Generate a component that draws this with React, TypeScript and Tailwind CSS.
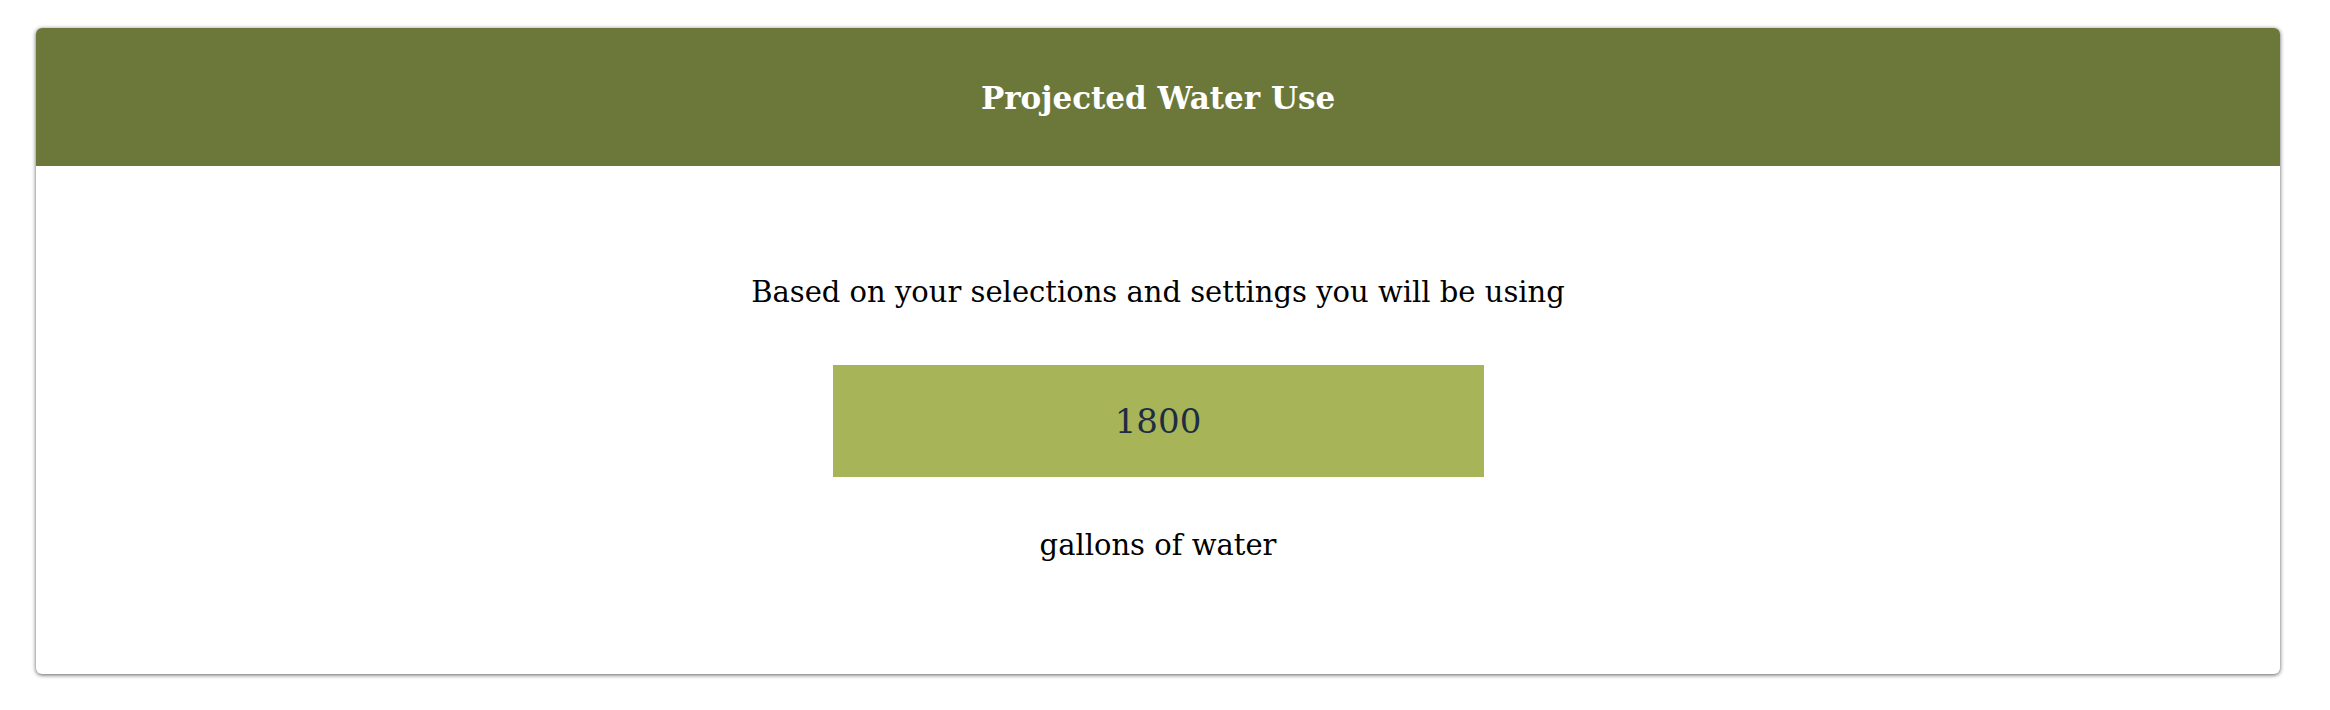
const serif = { fontFamily: '"DejaVu Serif", "Liberation Serif", serif' };

const WaterUse = () => {
  const gallons = 1800;

  return (
    <div className="pt-[28px] pl-[36px] pb-[36px] bg-white" style={serif}>
      <div className="w-[2244px] rounded-md overflow-hidden bg-white shadow-[0_1px_4px_rgba(0,0,0,0.65)]">
        <div className="h-[138px] bg-[#6c783a] flex items-center justify-center">
          <h2 className="text-[31px] leading-[34px] font-bold text-white pt-[2px]">Projected Water Use</h2>
        </div>
        <div className="flex flex-col items-center pt-[109px] pb-[112px]">
          <p className="text-[29px] leading-[34px] text-black">
            Based on your selections and settings you will be using
          </p>
          <div className="mt-[56px] w-[651px] h-[112px] bg-[#a7b558] flex items-center justify-center">
            <span className="text-[34px] leading-[40px] text-[#1f2d43]">{gallons}</span>
          </div>
          <p className="mt-[51px] text-[29px] leading-[34px] text-black">gallons of water</p>
        </div>
      </div>
    </div>
  );
};

export default function App() {
  return <WaterUse />;
}
